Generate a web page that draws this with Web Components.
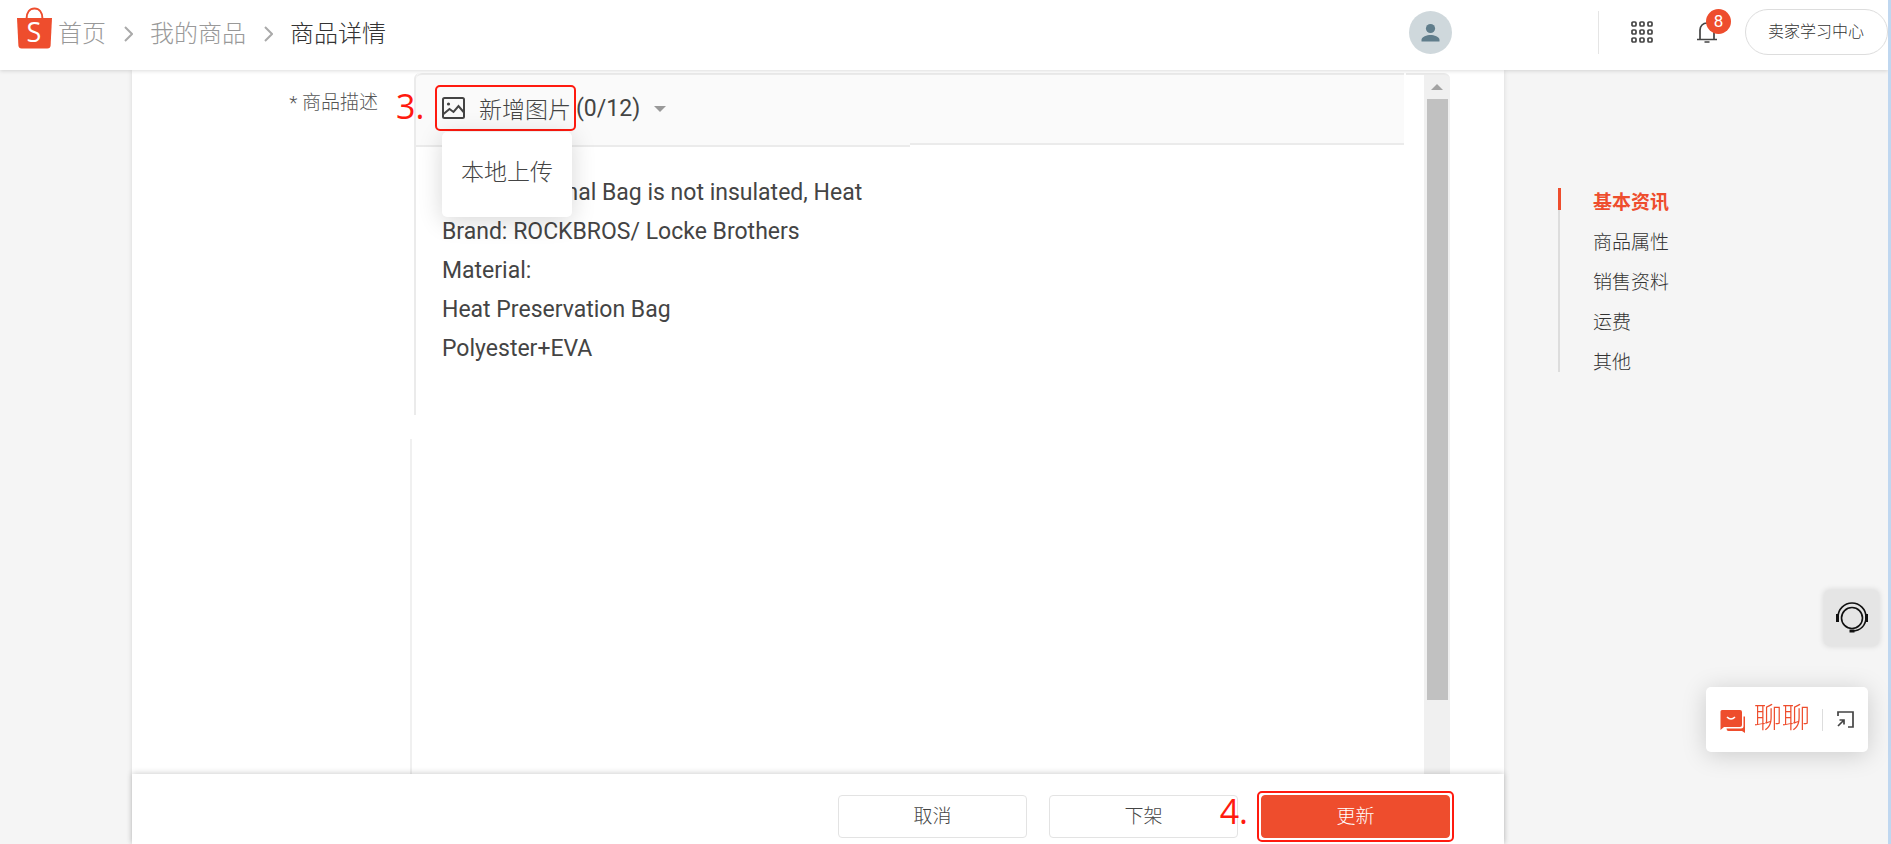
<!DOCTYPE html>
<html lang="zh-CN">
<head>
<meta charset="UTF-8">
<meta name="viewport" content="width=device-width, initial-scale=1.0">
<title>商品详情</title>
<style>
  :root {
    --brand: #ee4d2d;
    --mark: #ff1a0f;
    --line: #ebebeb;
    --text: #444;
  }
  body {
    margin: 0;
    background: #f5f5f5;
    color: var(--text);
    font-family: Roboto, "Noto Sans CJK SC", sans-serif;
    font-size: 19px;
    font-weight: 300;
  }
</style>
</head>
<body>
<seller-page>
  <page-header slot="header">
    <crumb-item href="#home">首页</crumb-item>
    <crumb-item href="#products">我的商品</crumb-item>
    <crumb-item current>商品详情</crumb-item>
  </page-header>
  <product-description></product-description>
  <action-bar slot="actions"></action-bar>
  <section-nav slot="aside"></section-nav>
  <floating-tools slot="tools"></floating-tools>
</seller-page>

<script>
class SellerPage extends HTMLElement {
  connectedCallback() {
    this.attachShadow({ mode: 'open' });
    this.shadowRoot.innerHTML = `
      <style>
        :host {
          display: flex;
          flex-direction: column;
          height: 100vh;
          overflow: hidden;
          box-sizing: border-box;
          border-right: 3px solid #bfd7f0;
        }
        .body {
          flex: 1;
          min-height: 0;
          display: flex;
          padding-left: 132px;
        }
        main {
          flex: 1;
          min-width: 0;
          display: flex;
          flex-direction: column;
          background: #fff;
          box-shadow: 0 0 5px rgba(0, 0, 0, 0.12);
        }
        aside {
          width: 384px;
        }
      </style>
      <slot name="header"></slot>
      <div class="body">
        <main>
          <slot></slot>
          <slot name="actions"></slot>
        </main>
        <aside><slot name="aside"></slot></aside>
      </div>
      <slot name="tools"></slot>
    `;
  }
}
customElements.define('seller-page', SellerPage);

class CrumbItem extends HTMLElement {
  connectedCallback() {
    const current = this.hasAttribute('current');
    this.attachShadow({ mode: 'open' });
    this.shadowRoot.innerHTML = `
      <style>
        :host {
          display: flex;
          align-items: center;
          font-size: 24px;
          line-height: 36px;
        }
        a { color: #999; text-decoration: none; }
        span { color: #333; }
        svg { margin: 0 17px 0 18px; }
      </style>
      ${current
        ? '<span aria-current="page"><slot></slot></span>'
        : `<a href="${this.getAttribute('href')}"><slot></slot></a>
           <svg width="9" height="16" viewBox="0 0 9 16" fill="none" stroke="#aaa" stroke-width="2"><path d="M1 1l7 7-7 7"/></svg>`}
    `;
  }
}
customElements.define('crumb-item', CrumbItem);

class PageHeader extends HTMLElement {
  connectedCallback() {
    this.attachShadow({ mode: 'open' });
    this.shadowRoot.innerHTML = `
      <style>
        :host {
          display: block;
          position: relative;
          z-index: 2;
          background: #fff;
          box-shadow: 0 1px 4px rgba(0, 0, 0, 0.14);
        }
        header {
          display: flex;
          align-items: center;
          height: 70px;
          padding-left: 16px;
          box-sizing: border-box;
        }
        .logo { display: flex; padding-bottom: 14px; margin-right: 5px; }
        .logo svg { overflow: visible; }
        nav { display: flex; flex: 1; padding-bottom: 2px; }
        .tools { display: flex; align-items: center; padding-bottom: 6px; }
        button {
          display: flex;
          position: relative;
          padding: 0;
          border: 0;
          background: none;
          font: inherit;
          color: inherit;
          cursor: pointer;
        }
        .avatar { margin-right: 146px; }
        .rule { width: 1px; height: 43px; background: #e5e5e5; margin-right: 32px; }
        .apps { margin-right: 43px; }
        .bell { margin-right: 28px; }
        .badge {
          position: absolute;
          left: 9px;
          top: -13px;
          width: 25px;
          height: 25px;
          border-radius: 50%;
          background: var(--brand);
          color: #fff;
          font-size: 17px;
          font-weight: 400;
          line-height: 25px;
          text-align: center;
        }
        .learn {
          padding: 0 23px 0 22px;
          border: 1px solid #ddd;
          border-radius: 24px;
          font-size: 16px;
          line-height: 44px;
          color: #333;
          text-decoration: none;
        }
      </style>
      <header>
        <a class="logo" href="#home" aria-label="Shopee">
          <svg width="37" height="42" viewBox="0 0 37 42">
            <path d="M10.500 12C10.500 5 14 1.500 18.500 1.500S26.500 5 26.500 12" fill="none" stroke="#ee4d2d" stroke-width="2"/>
            <path d="M1 11h35l-1.400 27.500q-.2 3-3.200 3H5.600q-3 0-3.200-3z" fill="#ee4d2d"/>
            <text x="18" y="35" text-anchor="middle" font-family="Open Sans, sans-serif" font-weight="400" font-size="27" fill="#fff">S</text>
          </svg>
        </a>
        <nav aria-label="breadcrumb"><slot></slot></nav>
        <div class="tools">
          <button class="avatar" type="button" aria-label="账户">
            <svg width="43" height="43" viewBox="0 0 43 43">
              <circle cx="21.500" cy="21.500" r="21.500" fill="#cfd8dc"/>
              <circle cx="21.500" cy="17.500" r="4.600" fill="#607d8b"/>
              <path d="M12.500 30.500v-1.800c0-3 5.500-4.700 9-4.700s9 1.700 9 4.700v1.800z" fill="#607d8b"/>
            </svg>
          </button>
          <div class="rule"></div>
          <button class="apps" type="button" aria-label="应用">
            <svg width="23" height="23" viewBox="0 0 23 23" fill="none" stroke="#444" stroke-width="1.700">
              <g id="r"><rect x="1" y="1" width="4" height="4" rx="1"/><rect x="9" y="1" width="4" height="4" rx="1"/><rect x="17" y="1" width="4" height="4" rx="1"/></g>
              <use href="#r" y="8"/><use href="#r" y="16"/>
            </svg>
          </button>
          <button class="bell" type="button" aria-label="通知">
            <svg width="20" height="21" viewBox="0 0 20 21" fill="none" stroke="#444" stroke-width="1.700">
              <path d="M0 17.500h20M3 17.500V8c0-4 3-7 7-7s7 3 7 7v9.500M7.500 20h5"/>
            </svg>
            <span class="badge">8</span>
          </button>
          <a class="learn" href="#learn">卖家学习中心</a>
        </div>
      </header>
    `;
  }
}
customElements.define('page-header', PageHeader);

class ProductDescription extends HTMLElement {
  connectedCallback() {
    this.attachShadow({ mode: 'open' });
    this.shadowRoot.innerHTML = `
      <style>
        :host {
          flex: 1;
          min-height: 0;
          display: flex;
          padding: 3px 54px 0 0;
        }
        .label {
          position: relative;
          width: 246px;
          margin-right: 32px;
          padding-top: 16px;
          line-height: 28px;
          color: #555;
          text-align: right;
        }
        .step {
          position: absolute;
          left: 264px;
          top: 8px;
          z-index: 1;
          font: 34px/50px "Open Sans", sans-serif;
          color: var(--mark);
        }
        .column {
          flex: 1;
          min-width: 0;
          display: flex;
          flex-direction: column;
          gap: 24px;
        }
        .editor {
          margin-left: 4px;
          border-left: 2px solid var(--line);
          border-top-left-radius: 6px;
        }
        .toolbar {
          display: flex;
          align-items: flex-start;
          height: 74px;
          padding: 10px 20px 0 19px;
          box-sizing: border-box;
          border-top: 2px solid var(--line);
          border-top-left-radius: 6px;
          /* the bottom rule sits a little higher on the right half */
          background:
            linear-gradient(#ebebeb, #ebebeb) left bottom / 50% 2px no-repeat,
            linear-gradient(#fff, #fff) right bottom / 50% 2px no-repeat,
            linear-gradient(#ebebeb, #ebebeb) right bottom 2px / 50% 2px no-repeat,
            #fafafa;
        }
        .add { position: relative; }
        button { font: inherit; color: inherit; cursor: pointer; }
        .add > button {
          display: flex;
          align-items: center;
          gap: 14px;
          height: 46px;
          padding: 0 3px 0 5px;
          border: 2px solid var(--mark);
          border-radius: 5px;
          background: none;
          font-size: 23px;
        }
        .menu {
          position: absolute;
          left: 7px;
          top: 47px;
          padding: 21px 19px 24px;
          border-radius: 5px;
          background: #fff;
          box-shadow: 0 4px 24px rgba(0, 0, 0, 0.16);
        }
        .menu button {
          padding: 0;
          border: 0;
          background: none;
          font-size: 23px;
          line-height: 40px;
          white-space: nowrap;
        }
        .count { font-size: 23px; font-weight: 400; line-height: 48px; }
        .caret {
          margin: 21px 0 0 14px;
          border: 6px solid transparent;
          border-top: 6px solid #999;
          border-bottom: 0;
        }
        textarea {
          display: block;
          width: 100%;
          height: 268px;
          padding: 26px 26px 0;
          box-sizing: border-box;
          border: 0;
          outline: 0;
          resize: none;
          overflow: hidden;
          background: none;
          color: inherit;
          font-family: inherit;
          font-size: 23px;
          font-weight: 400;
          line-height: 39px;
          text-indent: 116px;
        }
        .rest {
          flex: 1;
          border-left: 2px solid #f0f0f0;
        }
        .scroll {
          display: flex;
          flex-direction: column;
          align-items: center;
          width: 44px;
          padding-left: 18px;
          margin-left: 2px;
          box-sizing: border-box;
          border-top: 2px solid var(--line);
          border-top-right-radius: 6px;
          background: linear-gradient(#f0f0f0, #f0f0f0) right / 26px 100% no-repeat;
        }
        .up {
          margin: 9px 0;
          border: 6px solid transparent;
          border-bottom: 6px solid #a3a3a3;
          border-top: 0;
        }
        .thumb {
          width: 21px;
          height: 86%;
          background: #c1c1c1;
        }
      </style>
      <div class="label">
        <label for="desc">* 商品描述</label>
        <span class="step">3.</span>
      </div>
      <div class="column">
        <div class="editor">
          <div class="toolbar">
            <div class="add">
              <button type="button" aria-expanded="true">
                <svg width="23" height="22" viewBox="0 0 23 22" fill="none" stroke="#444" stroke-width="2">
                  <rect x="1" y="1" width="21" height="20" rx="1.500"/>
                  <path d="M1.500 17l6-5 4 3 5-6 5.500 6.500"/>
                  <circle cx="6.500" cy="7" r="1.600" fill="#444" stroke="none"/>
                </svg>
                新增图片
              </button>
              <div class="menu"><button type="button">本地上传</button></div>
            </div>
            <span class="count">(0/12)</span>
            <span class="caret"></span>
          </div>
          <textarea id="desc" spellcheck="false">mal Bag is not insulated, Heat
Brand: ROCKBROS/ Locke Brothers
Material:
Heat Preservation Bag
Polyester+EVA</textarea>
        </div>
        <div class="rest"></div>
      </div>
      <div class="scroll"><span class="up"></span><div class="thumb"></div></div>
    `;
  }
}
customElements.define('product-description', ProductDescription);

class ActionBar extends HTMLElement {
  connectedCallback() {
    this.attachShadow({ mode: 'open' });
    this.shadowRoot.innerHTML = `
      <style>
        :host {
          display: flex;
          justify-content: flex-end;
          align-items: center;
          gap: 22px;
          height: 70px;
          padding: 14px 50px 0 0;
          box-sizing: border-box;
          position: relative;
          background: #fff;
          box-shadow: 0 -1px 6px rgba(0, 0, 0, 0.18);
        }
        button {
          width: 189px;
          height: 43px;
          padding: 0 0 4px;
          border: 1px solid #e3e3e3;
          border-radius: 4px;
          background: #fff;
          color: #444;
          font: inherit;
          cursor: pointer;
        }
        .primary {
          border-color: var(--brand);
          background: var(--brand);
          color: #fff;
        }
        .marked {
          position: relative;
          display: flex;
          margin-left: -3px;
          padding: 2px;
          border: 2px solid var(--mark);
          border-radius: 5px;
        }
        .step {
          position: absolute;
          right: 204px;
          top: -7px;
          font: 34px/50px "Open Sans", sans-serif;
          color: var(--mark);
        }
      </style>
      <button type="button">取消</button>
      <button type="button">下架</button>
      <div class="marked">
        <span class="step">4.</span>
        <button class="primary" type="button">更新</button>
      </div>
    `;
  }
}
customElements.define('action-bar', ActionBar);

class SectionNav extends HTMLElement {
  connectedCallback() {
    this.attachShadow({ mode: 'open' });
    this.shadowRoot.innerHTML = `
      <style>
        :host { display: block; padding: 113px 0 0 54px; }
        nav {
          display: flex;
          flex-direction: column;
          padding-left: 35px;
          background:
            linear-gradient(var(--brand), var(--brand)) 0 5px / 3px 22px no-repeat,
            linear-gradient(#ddd, #ddd) 0 5px / 2px 184px no-repeat;
        }
        a {
          color: #333;
          line-height: 40px;
          text-decoration: none;
        }
        .active { color: var(--brand); font-weight: 700; }
      </style>
      <nav>
        <a class="active" href="#basic">基本资讯</a>
        <a href="#attributes">商品属性</a>
        <a href="#sales">销售资料</a>
        <a href="#shipping">运费</a>
        <a href="#other">其他</a>
      </nav>
    `;
  }
}
customElements.define('section-nav', SectionNav);

class FloatingTools extends HTMLElement {
  connectedCallback() {
    this.attachShadow({ mode: 'open' });
    this.shadowRoot.innerHTML = `
      <style>
        :host {
          position: fixed;
          right: 12px;
          bottom: 92px;
          z-index: 3;
          display: flex;
          flex-direction: column;
          align-items: flex-end;
          gap: 41px;
        }
        button {
          display: flex;
          align-items: center;
          padding: 0;
          border: 0;
          background: none;
          font: inherit;
          cursor: pointer;
        }
        .service {
          justify-content: center;
          width: 55px;
          height: 56px;
          border-radius: 5px;
          background: #e5e5e5;
          box-shadow: 0 0 6px rgba(0, 0, 0, 0.14);
        }
        .chat {
          display: flex;
          align-items: center;
          height: 65px;
          margin-right: 11px;
          padding: 0 14px;
          border-radius: 5px;
          background: #fff;
          box-shadow: 0 3px 24px rgba(0, 0, 0, 0.17);
        }
        .open {
          gap: 8px;
          color: var(--brand);
          font-size: 28px;
          line-height: 40px;
          padding-bottom: 2px;
        }
        .open svg { margin-top: 5px; }
        .rule { width: 1px; height: 22px; margin: 0 14px 0 12px; background: #ddd; }
      </style>
      <button class="service" type="button" aria-label="客服">
        <svg width="34" height="34" viewBox="0 0 34 34" fill="none" stroke="#111" stroke-width="1.600">
          <circle cx="17" cy="17" r="10.500"/>
          <path d="M3 16a14 14 0 0 1 28 0c0 8-5 14-14 14"/>
          <path d="M2.500 13v8M31.500 13v8" stroke-width="3"/>
          <path d="M14.500 30h5" stroke-width="3"/>
        </svg>
      </button>
      <div class="chat">
        <button class="open" type="button">
          <svg width="26" height="25" viewBox="0 0 26 25" fill="#ee4d2d">
            <path d="M2 1h18q2 0 2 2v13q0 2-2 2H4l-3.500 3V2.500Q.500 1 2 1z"/>
            <path d="M23.500 7.500h1.500V24l-3-2H8.500q-2 0-2-2.500H21q2.500 0 2.500-2.500z"/>
            <path d="M7 8q4 4 8 0" fill="none" stroke="#fff" stroke-width="1.600"/>
          </svg>
          聊聊
        </button>
        <span class="rule"></span>
        <button type="button" aria-label="展开">
          <svg width="17" height="17" viewBox="0 0 17 17" fill="none" stroke="#444" stroke-width="1.700">
            <path d="M1 5V1h15v15h-5M1 15l6-6M2.500 9H7v4.500"/>
          </svg>
        </button>
      </div>
    `;
  }
}
customElements.define('floating-tools', FloatingTools);
</script>
</body>
</html>
